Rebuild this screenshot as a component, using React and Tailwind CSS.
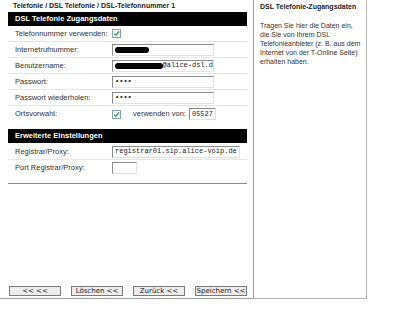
import React from "react";

const label = "text-[7.5px] text-[#333]";

const Check = () => (
  <span className="flex h-[9px] w-[9px] items-center justify-center border border-[#8aa0b8] bg-[#f4f8fc]">
    <svg width="7" height="7" viewBox="0 0 7 7">
      <path d="M1 3.6 L2.8 5.4 L6 1.4" stroke="#2f9a2f" strokeWidth="1.3" fill="none" />
    </svg>
  </span>
);

const Field = ({ w = "w-[102px]", children }) => (
  <div
    className={`flex h-[12px] ${w} items-center overflow-hidden border-t border-l border-t-[#8c8c8c] border-l-[#8c8c8c] border-r border-b border-r-[#e2e2e2] border-b-[#e2e2e2] bg-white pl-[2px] font-['Liberation_Mono',monospace] text-[7px] text-[#222]`}
  >
    {children}
  </div>
);

const Row = ({ name, children, last }) => (
  <div className={`flex h-[16px] items-center ${last ? "" : "border-b border-[#e6e6e6]"}`}>
    <div className={`w-[104px] pl-[7px] ${label}`}>{name}</div>
    <div className="flex items-center">{children}</div>
  </div>
);

const Bar = ({ children, className = "" }) => (
  <div className={`flex h-[14px] items-center bg-black pl-[7px] text-[7.5px] font-bold text-white ${className}`}>
    {children}
  </div>
);

const Blob = ({ w }) => <span className={`inline-block h-[6px] ${w} rounded-full bg-black`} />;

const Btn = ({ children }) => (
  <button className="flex h-[10px] w-[52px] items-center justify-center border border-[#7a7a7a] bg-[#ececec] font-['DejaVu_Sans',sans-serif] text-[7px] leading-none text-[#222]">
    {children}
  </button>
);

const helpLines = [
  "Tragen Sie hier die Daten ein,",
  "die Sie von Ihrem DSL",
  "Telefonieanbieter (z. B. aus dem",
  "Internet von der T-Online Seite)",
  "erhalten haben.",
];

export default function App() {
  return (
    <div className="flex h-[309px] w-[400px] bg-white font-['Liberation_Sans',Arial,sans-serif]">
      <div className="flex h-[299px] w-[254px] flex-col border-r border-b border-[#9a9a9a]">
        <div className="flex h-[12px] items-center pl-[13px] text-[7px] font-bold text-[#222]">
          Telefonie / DSL Telefonie / DSL-Telefonnummer 1
        </div>
        <div className="ml-[8px] w-[239px]">
          <Bar>DSL Telefonie Zugangsdaten</Bar>
          <Row name="Telefonnummer verwenden:">
            <Check />
          </Row>
          <Row name="Internetrufnummer:">
            <Field>
              <Blob w="w-[34px]" />
            </Field>
          </Row>
          <Row name="Benutzername:">
            <Field>
              <Blob w="w-[48px]" />
              <span className="whitespace-nowrap">@alice-dsl.d</span>
            </Field>
          </Row>
          <Row name="Passwort:">
            <Field>
              <span className="font-bold">••••</span>
            </Field>
          </Row>
          <Row name="Passwort wiederholen:">
            <Field>
              <span className="font-bold">••••</span>
            </Field>
          </Row>
          <Row name="Ortsvorwahl:" last>
            <Check />
            <span className={`ml-[12px] mr-[3px] ${label}`}>verwenden von:</span>
            <Field w="w-[27px]">05527</Field>
          </Row>
          <Bar className="mt-[7px]">Erweiterte Einstellungen</Bar>
          <div className="h-[1px]" />
          <Row name="Registrar/Proxy:">
            <Field w="w-[128px]">registrar01.sip.alice-voip.de</Field>
          </Row>
          <Row name="Port Registrar/Proxy:" last>
            <Field w="w-[25px]" />
          </Row>
          <div className="mt-[7px] border-t border-[#8a8a8a]" />
        </div>
        <div className="flex-1" />
        <div className="mb-[2px] ml-[9px] flex w-[238px] justify-between">
          <Btn>&lt;&lt; &lt;&lt;</Btn>
          <Btn>Löschen &lt;&lt;</Btn>
          <Btn>Zurück &lt;&lt;</Btn>
          <Btn>Speichern &lt;&lt;</Btn>
        </div>
      </div>
      <div className="h-[299px] w-[113px] border-r border-b border-[#b4b4b4] pl-[6px] pt-[2px] text-[7px] text-[#333]">
        <div className="whitespace-nowrap font-bold text-[#222]">DSL Telefonie-Zugangsdaten</div>
        <div className="mt-[8px] leading-[9px]">
          {helpLines.map((line) => (
            <div key={line} className="whitespace-nowrap">
              {line}
            </div>
          ))}
        </div>
      </div>
    </div>
  );
}
